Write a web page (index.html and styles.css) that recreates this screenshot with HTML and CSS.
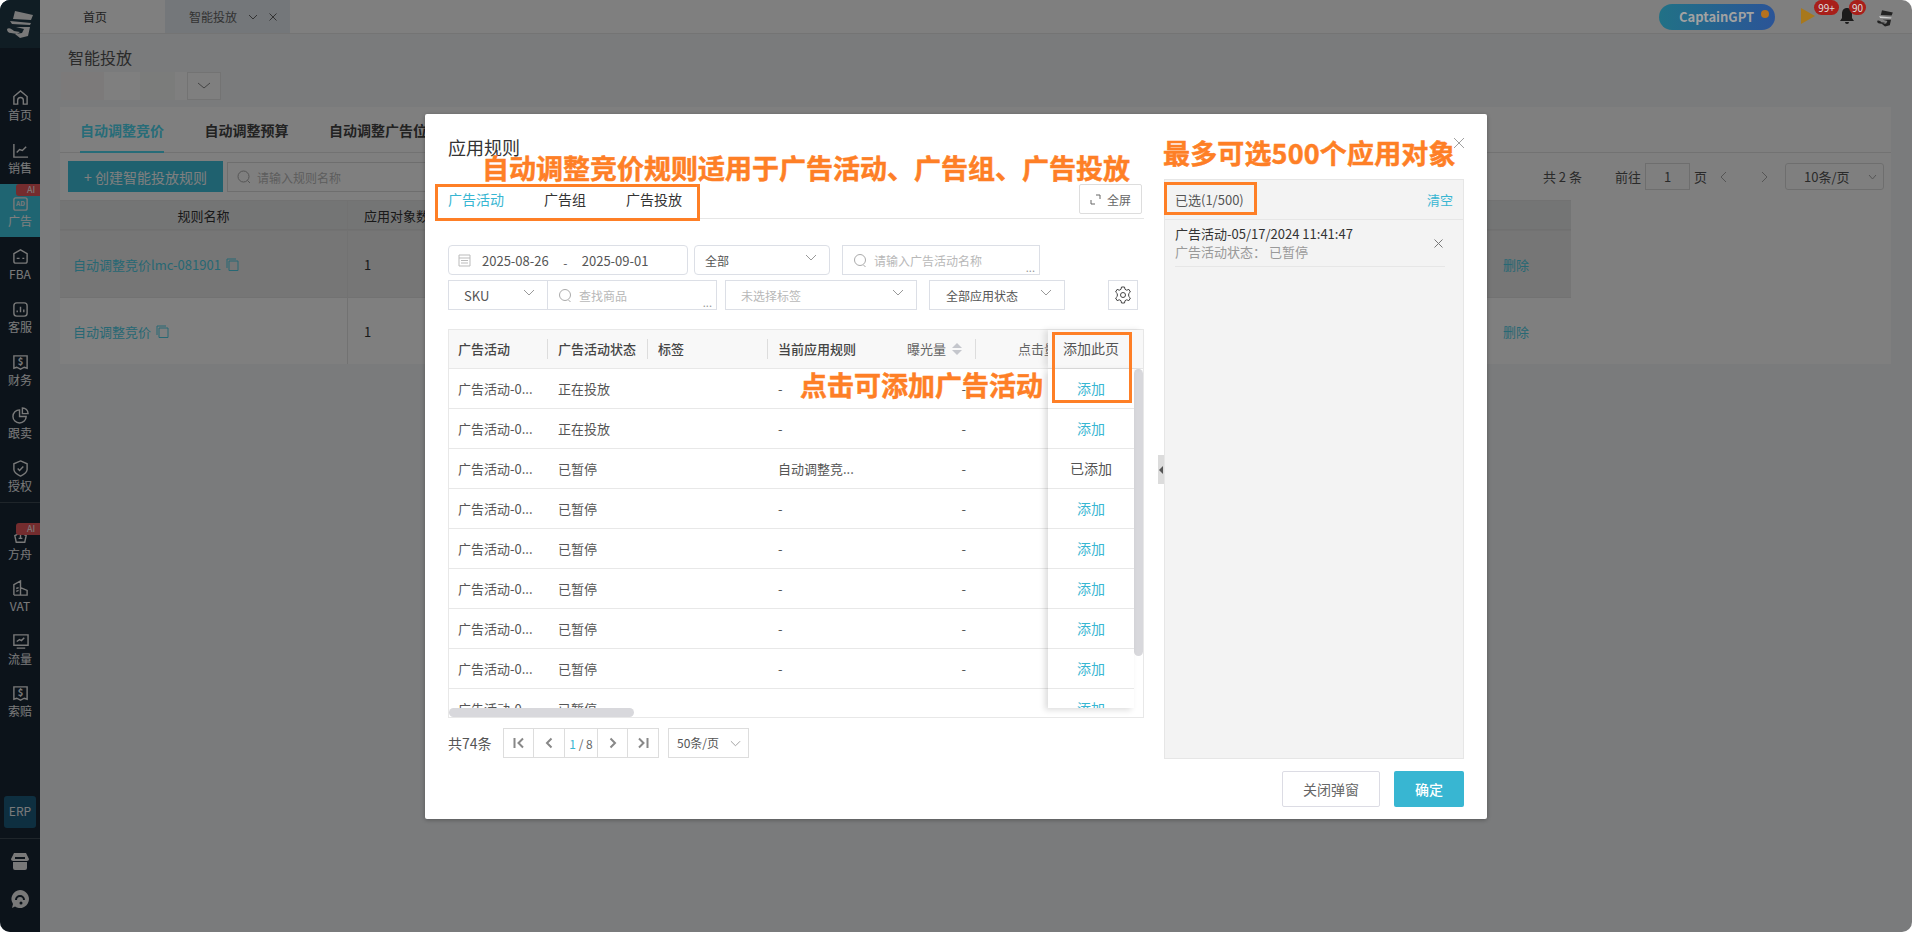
FILE: index.html
```html
<!DOCTYPE html>
<html lang="zh-CN">
<head>
    <meta charset="UTF-8">
    <meta name="viewport" content="width=device-width, initial-scale=1.0">
    <title>智能投放</title>
    <link rel="stylesheet" href="styles.css">
</head>
<body>
<div class="app">
    <!-- Sidebar -->
    <aside class="sidebar">
        <div class="side-logo">
            <svg width="40" height="40" viewBox="0 0 40 40"><path d="M15 6l18 4-2 5-18-1z" fill="#f2f2f2"/><path d="M10 16l21 2-1 2-18-1z" fill="#f2f2f2"/><path d="M16 22h14l-2 9-8 2-5-4 7-1 2-4z" fill="#f2f2f2"/><path d="M7 24c2-2 5 0 7 2l6 1-3 2-6-1c-3 0-4-2-4-4z" fill="#f2f2f2"/></svg>
        </div>
        <nav class="side-nav">
            <a class="side-item">
                <svg class="side-icon" viewBox="0 0 18 18"><path d="M2 8l7-6 7 6v8h-4v-4a3 3 0 0 0-6 0v4H2z"/></svg>
                <span>首页</span>
            </a>
            <a class="side-item">
                <svg class="side-icon" viewBox="0 0 18 18"><path d="M2 2v14h15M5 11l3-3 3 1 4-4"/></svg>
                <span>销售</span>
            </a>
            <a class="side-item active">
                <i class="ai-tag">AI</i>
                <svg class="side-icon" viewBox="0 0 18 18"><rect x="2" y="3" width="14" height="13" rx="2"/><text x="9" y="12" class="ad-text">AD</text></svg>
                <span>广告</span>
            </a>
            <a class="side-item">
                <svg class="side-icon" viewBox="0 0 18 18"><path d="M2 6l7-4 7 4v8a2 2 0 0 1-2 2H4a2 2 0 0 1-2-2zM5 11h3M11 11h2"/></svg>
                <span>FBA</span>
            </a>
            <a class="side-item">
                <svg class="side-icon" viewBox="0 0 18 18"><rect x="2" y="2" width="14" height="14" rx="3"/><path d="M5.500 12v-2M9 12V6M12.500 12V9"/></svg>
                <span>客服</span>
            </a>
            <a class="side-item">
                <svg class="side-icon" viewBox="0 0 18 18"><path d="M2 2h14v13l-3-1-4 2-4-2-3 1z"/><text x="9" y="12" class="ad-text dollar">$</text></svg>
                <span>财务</span>
            </a>
            <a class="side-item">
                <svg class="side-icon" viewBox="0 0 18 18"><path d="M8 3a7 7 0 1 0 7 7H8zM11 1v6h6a6 6 0 0 0-6-6z"/></svg>
                <span>跟卖</span>
            </a>
            <a class="side-item">
                <svg class="side-icon" viewBox="0 0 18 18"><path d="M9 1l7 3v6c0 3-3 5-7 7-4-2-7-4-7-7V4zM6 9l2 2 4-4"/></svg>
                <span>授权</span>
            </a>
        </nav>
        <nav class="side-nav side-second">
            <a class="side-item">
                <i class="ai-tag">AI</i>
                <svg class="side-icon" viewBox="0 0 18 18"><path d="M5 5l4-3 4 3M3 8l2-1c2-2 6-2 8 0l2 1-1.500 7h-9zM9 6v5M7 11h4"/></svg>
                <span>方舟</span>
            </a>
            <a class="side-item">
                <svg class="side-icon" viewBox="0 0 18 18"><path d="M2 16V5l7-4v15M9 8l7 3v5H2M4.500 9l2.500-1M4.500 12l2.500-1"/></svg>
                <span>VAT</span>
            </a>
            <a class="side-item">
                <svg class="side-icon" viewBox="0 0 18 18"><path d="M2 2h15v11H2zM5 16h9M5 9l3-2 2 1 3-3"/></svg>
                <span>流量</span>
            </a>
            <a class="side-item">
                <svg class="side-icon" viewBox="0 0 18 18"><path d="M2 2h14v13l-3-1-4 2-4-2-3 1z"/><text x="9" y="12" class="ad-text dollar">$</text></svg>
                <span>索赔</span>
            </a>
        </nav>
        <div class="side-bottom">
            <div class="erp">ERP</div>
            <div class="side-tools">
                <svg width="18" height="18" viewBox="0 0 18 18"><path d="M3 1h12l3 6c0 1-1 2-2 2H2C1 9 0 8 0 7zM2 10h14v6a2 2 0 0 1-2 2H4a2 2 0 0 1-2-2z" fill="#f2f2f2"/><path d="M4 6h10" stroke="#182634" stroke-width="2"/></svg>
                <svg width="18" height="18" viewBox="0 0 18 18"><path d="M9 0a9 9 0 1 1-5 16.500L1 18l1-4A9 9 0 0 1 9 0z" fill="#f2f2f2"/><path d="M5 10a4 4 0 1 1 8 0" fill="none" stroke="#182634" stroke-width="2"/><circle cx="10" cy="13" r="1.500" fill="#182634"/></svg>
            </div>
        </div>
    </aside>

    <main class="main">
        <!-- Top tabs -->
        <header class="topbar">
            <div class="top-tab">首页</div>
            <div class="top-tab current">
                <span>智能投放</span>
                <svg class="top-chev" width="10" height="6" viewBox="0 0 10 6"><path d="M1 1l4 4 4-4"/></svg>
                <svg class="top-chev" width="8" height="8" viewBox="0 0 8 8"><path d="M0.500 0.500l7 7M7.500 0.500l-7 7"/></svg>
            </div>
            <div class="status">
                <div class="gpt">CaptainGPT<i class="gpt-dot"></i></div>
                <div class="play"><i class="badge badge-play">99+</i></div>
                <div class="bell">
                    <svg width="16" height="18" viewBox="0 0 16 18"><path d="M8 1c3 0 5 2 5 6v4l2 3H1l2-3V7c0-4 2-6 5-6zM6 15h4a2 2 0 0 1-4 0z" fill="#1c1c1c"/></svg>
                    <i class="badge badge-bell">90</i>
                </div>
                <svg class="avatar" width="18" height="18" viewBox="5 4 30 30"><path d="M15 6l18 4-2 5-18-1z" fill="#222"/><path d="M10 16l21 2-1 2-18-1z" fill="#ccc"/><path d="M16 22h14l-2 9-8 2-5-4 7-1 2-4z" fill="#222"/><path d="M7 24c2-2 5 0 7 2l6 1-3 2-6-1c-3 0-4-2-4-4z" fill="#222"/></svg>
            </div>
        </header>

        <div class="page">
            <h1 class="page-title">智能投放</h1>
            <div class="store-filter">
                <i class="patch p1"></i><i class="patch p2"></i><i class="patch p3"></i><i class="patch p4"></i>
                <div class="patch-select"><svg width="14" height="8" viewBox="0 0 14 8"><path d="M1 1l6 5 6-5"/></svg></div>
            </div>

            <section class="card">
                <div class="card-tabs">
                    <div class="card-tab active">自动调整竞价</div>
                    <div class="card-tab">自动调整预算</div>
                    <div class="card-tab">自动调整广告位</div>
                </div>
                <div class="toolbar">
                    <button class="btn-create">+ 创建智能投放规则</button>
                    <div class="rule-search">
                        <svg class="search-svg" width="14" height="14" viewBox="0 0 14 14"><circle cx="6.500" cy="6.500" r="5.500"/><path d="M10.500 10.500l2.500 2.500"/></svg>
                        <span>请输入规则名称</span>
                    </div>
                    <div class="list-pager">
                        <span class="total">共 2 条</span>
                        <span>前往</span>
                        <span class="page-input">1</span>
                        <span>页</span>
                        <svg class="arrow" width="7" height="12" viewBox="0 0 7 12"><path d="M6 1L1 6l5 5"/></svg>
                        <svg class="arrow" width="7" height="12" viewBox="0 0 7 12"><path d="M1 1l5 5-5 5"/></svg>
                        <span class="size-select">10条/页<svg width="9" height="6" viewBox="0 0 9 6"><path d="M1 1l3.500 4L8 1"/></svg></span>
                    </div>
                </div>
                <div class="rules">
                    <div class="rule-row rule-head">
                        <div class="rule-name">规则名称</div>
                        <div class="rule-count">应用对象数</div>
                        <div class="rule-op"></div>
                    </div>
                    <div class="rule-row hover">
                        <div class="rule-name"><a>自动调整竞价lmc-081901</a><svg class="copy" width="13" height="13" viewBox="0 0 13 13"><path d="M3 3h9v9.500H3zM1 10V1h9"/></svg></div>
                        <div class="rule-count">1</div>
                        <div class="rule-op"><a>删除</a></div>
                    </div>
                    <div class="rule-row">
                        <div class="rule-name"><a>自动调整竞价</a><svg class="copy" width="13" height="13" viewBox="0 0 13 13"><path d="M3 3h9v9.500H3zM1 10V1h9"/></svg></div>
                        <div class="rule-count">1</div>
                        <div class="rule-op"><a>删除</a></div>
                    </div>
                </div>
            </section>
        </div>
    </main>

    <!-- Dialog -->
    <div class="overlay">
        <div class="modal">
            <svg class="modal-close" width="12" height="12" viewBox="0 0 12 12"><path d="M1 1l10 10M11 1L1 11"/></svg>
            <div class="modal-body">
                <div class="left-col">
                    <h2 class="modal-title">应用规则</h2>
                    <div class="object-tabs">
                        <div class="object-tab active">广告活动</div>
                        <div class="object-tab">广告组</div>
                        <div class="object-tab">广告投放</div>
                        <button class="btn-full">
                            <svg width="11" height="11" viewBox="0 0 11 11"><path d="M6 1h4v4M1 6v4h4"/></svg>全屏
                        </button>
                    </div>

                    <div class="filters">
                        <div class="field w-date round">
                            <svg class="cal" width="13" height="14" viewBox="0 0 13 14"><path d="M1 2h11v11H1zM1 5h11M3 7.500h7M3 10h7"/></svg>
                            <span class="date">2025-08-26</span><span class="d-sep">-</span><span class="date">2025-09-01</span>
                        </div>
                        <div class="field w-all round"><span>全部</span><svg class="chev" width="12" height="7" viewBox="0 0 12 7"><path d="M1 1l5 5 5-5"/></svg></div>
                        <div class="field w-name">
                            <svg class="search-svg" width="13" height="15" viewBox="0 0 13 15"><circle cx="6" cy="7" r="5.500"/><path d="M9.500 12l2 2"/></svg>
                            <span class="ph">请输入广告活动名称</span><span class="dots">...</span>
                        </div>
                    </div>
                    <div class="filters second">
                        <div class="field w-sku"><span>SKU</span><svg class="chev" width="12" height="7" viewBox="0 0 12 7"><path d="M1 1l5 5 5-5"/></svg></div>
                        <div class="field w-goods">
                            <svg class="search-svg" width="13" height="15" viewBox="0 0 13 15"><circle cx="6" cy="7" r="5.500"/><path d="M9.500 12l2 2"/></svg>
                            <span class="ph">查找商品</span><span class="dots">...</span>
                        </div>
                        <div class="field w-tag"><span class="ph">未选择标签</span><svg class="chev" width="12" height="7" viewBox="0 0 12 7"><path d="M1 1l5 5 5-5"/></svg></div>
                        <div class="field w-state"><span>全部应用状态</span><svg class="chev" width="12" height="7" viewBox="0 0 12 7"><path d="M1 1l5 5 5-5"/></svg></div>
                        <div class="gear">
                            <svg width="18" height="18" viewBox="0 0 18 18"><path d="M7.500 1h3l.5 2.300 1.700.9 2.200-.8 1.500 2.600-1.700 1.600v2.800l1.700 1.600-1.500 2.600-2.200-.8-1.700.9-.5 2.300h-3L7 14.700l-1.700-.9-2.200.8-1.500-2.600 1.700-1.600V7.600L1.600 6l1.500-2.600 2.200.8L7 3.300z"/><circle cx="9" cy="9" r="2.500"/></svg>
                        </div>
                    </div>

                    <div class="tbl">
                        <div class="tbl-head">
                            <div class="head-main">
                                <div class="th c1 sep">广告活动</div>
                                <div class="th c2 sep">广告活动状态</div>
                                <div class="th c3 sep">标签</div>
                                <div class="th c4">当前应用规则</div>
                                <div class="th c5 sep light">曝光量<span class="sort"><i class="up"></i><i class="down"></i></span></div>
                                <div class="th c6 light">点击量</div>
                            </div>
                            <div class="head-fixed">添加此页</div>
                        </div>
                        <div class="tbl-body">
                            <div class="body-main">
                                <div class="tr"><div class="c1">广告活动-0...</div><div class="c2">正在投放</div><div class="c3"></div><div class="c4">-</div><div class="c5">-</div><div class="c6">-</div></div>
                                <div class="tr"><div class="c1">广告活动-0...</div><div class="c2">正在投放</div><div class="c3"></div><div class="c4">-</div><div class="c5">-</div><div class="c6">-</div></div>
                                <div class="tr"><div class="c1">广告活动-0...</div><div class="c2">已暂停</div><div class="c3"></div><div class="c4">自动调整竞...</div><div class="c5">-</div><div class="c6">-</div></div>
                                <div class="tr"><div class="c1">广告活动-0...</div><div class="c2">已暂停</div><div class="c3"></div><div class="c4">-</div><div class="c5">-</div><div class="c6">-</div></div>
                                <div class="tr"><div class="c1">广告活动-0...</div><div class="c2">已暂停</div><div class="c3"></div><div class="c4">-</div><div class="c5">-</div><div class="c6">-</div></div>
                                <div class="tr"><div class="c1">广告活动-0...</div><div class="c2">已暂停</div><div class="c3"></div><div class="c4">-</div><div class="c5">-</div><div class="c6">-</div></div>
                                <div class="tr"><div class="c1">广告活动-0...</div><div class="c2">已暂停</div><div class="c3"></div><div class="c4">-</div><div class="c5">-</div><div class="c6">-</div></div>
                                <div class="tr"><div class="c1">广告活动-0...</div><div class="c2">已暂停</div><div class="c3"></div><div class="c4">-</div><div class="c5">-</div><div class="c6">-</div></div>
                                <div class="tr"><div class="c1">广告活动-0...</div><div class="c2">已暂停</div><div class="c3"></div><div class="c4">-</div><div class="c5">-</div><div class="c6">-</div></div>
                            </div>
                            <div class="body-fixed">
                                <div class="td-add"><a>添加</a></div>
                                <div class="td-add"><a>添加</a></div>
                                <div class="td-add">已添加</div>
                                <div class="td-add"><a>添加</a></div>
                                <div class="td-add"><a>添加</a></div>
                                <div class="td-add"><a>添加</a></div>
                                <div class="td-add"><a>添加</a></div>
                                <div class="td-add"><a>添加</a></div>
                                <div class="td-add"><a>添加</a></div>
                            </div>
                            <div class="vbar"><i></i></div>
                        </div>
                        <div class="hbar"><i></i></div>
                    </div>

                    <div class="pager">
                        <span class="pager-total">共74条</span>
                        <div class="pager-box">
                            <span class="pg w30"><svg width="12" height="12" viewBox="0 0 12 12"><path d="M1.500 1v10M10 1.500L5.500 6l4.500 4.500"/></svg></span>
                            <span class="pg w31"><svg width="8" height="12" viewBox="0 0 8 12"><path d="M6.500 1.500L2 6l4.500 4.500"/></svg></span>
                            <span class="pg w33"><b>1</b>&nbsp;/ 8</span>
                            <span class="pg w30"><svg width="8" height="12" viewBox="0 0 8 12"><path d="M1.500 1.500L6 6l-4.500 4.500"/></svg></span>
                            <span class="pg w30 last"><svg width="12" height="12" viewBox="0 0 12 12"><path d="M10.500 1v10M2 1.500L6.500 6 2 10.500"/></svg></span>
                        </div>
                        <div class="pager-size">50条/页<svg class="chev" width="11" height="7" viewBox="0 0 12 7"><path d="M1 1l5 5 5-5"/></svg></div>
                    </div>
                </div>

                <aside class="picked">
                    <div class="collapse"><i></i></div>
                    <div class="picked-head">
                        <span>已选(1/500)</span>
                        <a>清空</a>
                    </div>
                    <div class="picked-item">
                        <div>
                            <div class="picked-name">广告活动-05/17/2024 11:41:47</div>
                            <div class="picked-state">广告活动状态： 已暂停</div>
                        </div>
                        <svg class="picked-x" width="9" height="9" viewBox="0 0 9 9"><path d="M0.500 0.500l8 8M8.500 0.500l-8 8"/></svg>
                    </div>
                </aside>
            </div>
            <div class="modal-foot">
                <button class="btn-close">关闭弹窗</button>
                <button class="btn-ok">确定</button>
            </div>

            <!-- Orange notes drawn over the dialog -->
            <div class="note note-a">自动调整竞价规则适用于广告活动、广告组、广告投放</div>
            <div class="note note-b">最多可选500个应用对象</div>
            <div class="note note-c">点击可添加广告活动</div>
            <div class="mark mark-a"></div>
            <div class="mark mark-b"></div>
            <div class="mark mark-c"></div>
        </div>
    </div>
</div>
</body>
</html>
```

FILE: styles.css
```css
/* Base */
* {
    margin: 0;
    padding: 0;
    box-sizing: border-box;
    font-family: "Noto Sans CJK SC", "Noto Sans", sans-serif;
}

html, body {
    height: 100%;
    background-color: #fff;
    overflow: hidden;
}

i {
    font-style: normal;
}

.app {
    position: relative;
    display: flex;
    width: 100%;
    height: 100%;
    border-radius: 10px;
    overflow: hidden;
    color: #333;
}

/* Sidebar */
.sidebar {
    width: 40px;
    flex-shrink: 0;
    display: flex;
    flex-direction: column;
    background-color: #182634;
    color: #f4f4f4;
}

.side-logo {
    height: 48px;
    padding-top: 5px;
    background-color: #203a48;
}

.side-nav {
    margin-top: 30px;
    border-bottom: 1px solid #3e4a55;
}

.side-second {
    margin-top: 14px;
    border-bottom: none;
}

.side-item {
    position: relative;
    height: 53px;
    display: flex;
    flex-direction: column;
    align-items: center;
    justify-content: flex-end;
    padding-bottom: 8px;
    font-size: 12px;
    line-height: 16px;
}

.side-second .side-item {
    height: 52.500px;
}

.side-item.active {
    background-color: #3fcbe4;
    color: #fff;
}

.side-icon {
    width: 17px;
    height: 17px;
    margin-bottom: 1px;
    fill: none;
    stroke: #f2f2f2;
    stroke-width: 1.500;
}

.ad-text {
    font-size: 7px;
    font-weight: 700;
    fill: #f2f2f2;
    stroke: none;
    text-anchor: middle;
}

.dollar {
    font-size: 10px;
}

.ai-tag {
    position: absolute;
    top: 0;
    right: 0;
    width: 24px;
    height: 12px;
    padding-left: 6px;
    border-radius: 3px 0 0 3px;
    background-color: #e8585c;
    color: #fff;
    font-size: 9px;
    line-height: 12px;
    text-align: center;
}

.side-second .ai-tag {
    top: 6px;
}

.side-bottom {
    margin-top: auto;
}

.erp {
    width: 32px;
    height: 32px;
    margin: 0 4px 10px;
    border-radius: 3px;
    background-color: #1c5e80;
    color: #f4f4f4;
    font-size: 12px;
    line-height: 30px;
    text-align: center;
}

.side-tools {
    height: 94px;
    padding-top: 13px;
    border-top: 1px solid #3e4a55;
    display: flex;
    flex-direction: column;
    align-items: center;
    gap: 20px;
}

/* Main area */
.main {
    flex: 1;
    min-width: 0;
    display: flex;
    flex-direction: column;
    background-color: #f4f6f8;
}

.topbar {
    height: 34px;
    display: flex;
    background-color: #fff;
    border-bottom: 1px solid #e8e8e8;
    font-size: 12px;
}

.top-tab {
    width: 125px;
    display: flex;
    align-items: center;
    padding-left: 43px;
    color: #444;
}

.top-tab.current {
    padding-left: 24px;
    background-color: #e8eff5;
    color: #666;
}

.top-chev {
    margin-left: 11px;
    fill: none;
    stroke: #666;
}

.status {
    position: relative;
    z-index: 20;
    margin-left: auto;
    display: flex;
    align-items: flex-start;
    padding-right: 18px;
}

.gpt {
    position: relative;
    width: 116px;
    height: 26px;
    margin-top: 4px;
    padding-left: 20px;
    border-radius: 13px;
    background-image: linear-gradient(90deg, #217186, #2b5497);
    color: #a2a2a2;
    font-size: 13px;
    font-weight: 700;
    line-height: 26px;
}

.gpt-dot {
    position: absolute;
    top: 6px;
    right: 6px;
    width: 8px;
    height: 8px;
    border-radius: 50%;
    background-color: #b5721f;
}

.play {
    position: relative;
    width: 0;
    height: 0;
    margin: 8px 0 0 26px;
    border-style: solid;
    border-width: 8px 0 8px 14px;
    border-color: transparent transparent transparent #a8781c;
}

.badge {
    position: absolute;
    height: 15px;
    border-radius: 8px;
    background-color: #a81f1a;
    color: #ddd;
    font-size: 10px;
    line-height: 15px;
    text-align: center;
}

.badge-play {
    top: -16px;
    left: -1px;
    width: 25px;
}

.badge-bell {
    top: 0;
    left: 10px;
    width: 17px;
}

.bell {
    position: relative;
    width: 34px;
    margin-left: 24px;
    padding-top: 7px;
}

.avatar {
    margin: 9px 0 0 3px;
}

/* Page */
.page {
    flex: 1;
}

.page-title {
    padding: 12px 0 0 28px;
    height: 38px;
    font-size: 16px;
    font-weight: 400;
    line-height: 22px;
    color: #555;
}

.store-filter {
    display: flex;
    margin-left: 21px;
    height: 28px;
}

.patch {
    display: block;
    height: 28px;
}

.p1 { width: 43px; background-color: #f8f4f4; }
.p2 { width: 36px; background-color: #fff; }
.p3 { width: 35px; background-color: #f6f8f6; }
.p4 { width: 12px; background-color: #fff; }

.patch-select {
    width: 34px;
    height: 28px;
    display: flex;
    align-items: center;
    justify-content: center;
    background-color: #fff;
    border: 1px solid #e6e6e6;
}

.patch-select svg {
    fill: none;
    stroke: #888;
}

.card {
    width: 1831px;
    margin: 7px 0 0 20px;
    background-color: #fff;
}

.card-tabs {
    height: 46px;
    display: flex;
    gap: 40.500px;
    padding-left: 20px;
    border-bottom: 1px solid #e4e4e4;
}

.card-tab {
    height: 46px;
    font-size: 14px;
    font-weight: 700;
    line-height: 47px;
    color: #444;
}

.card-tab.active {
    border-bottom: 2px solid #4fd8f0;
    color: #4fd8f0;
}

.toolbar {
    height: 47px;
    display: flex;
    align-items: flex-start;
    padding: 8px 7px 0 8px;
    font-size: 13px;
    color: #555;
}

.btn-create {
    width: 155px;
    height: 31px;
    border: none;
    background-color: #3fc2de;
    color: #fff;
    font-size: 14px;
}

.rule-search {
    width: 240px;
    height: 30px;
    margin: 1px 0 0 4px;
    display: flex;
    align-items: center;
    gap: 6px;
    padding-left: 9px;
    border: 1px solid #ddd;
    color: #bbb;
    font-size: 12px;
}

.search-svg {
    flex-shrink: 0;
    fill: none;
    stroke: #aaa;
}

.list-pager {
    margin-left: auto;
    display: flex;
    align-items: center;
    height: 27px;
    margin-top: 2px;
}

.total {
    margin-right: 33px;
}

.page-input {
    width: 45px;
    height: 27px;
    margin: 0 4px;
    border: 1px solid #ddd;
    line-height: 25px;
    text-align: center;
}

.arrow {
    margin-left: 13px;
    fill: none;
    stroke: #aaa;
}

.arrow + .arrow {
    margin-left: 34px;
}

.size-select {
    width: 99px;
    height: 27px;
    margin-left: 17px;
    padding-left: 18px;
    display: flex;
    align-items: center;
    justify-content: space-between;
    padding-right: 6px;
    border: 1px solid #ddd;
    border-radius: 3px;
}

.size-select svg {
    fill: none;
    stroke: #aaa;
}

.rule-row {
    display: flex;
    height: 67px;
    width: 1511px;
    border-top: 1px solid #e4e4e4;
    font-size: 13px;
    align-items: stretch;
}

.rule-row.rule-head {
    height: 30px;
    background-color: #e8eaeb;
    border-bottom: 1px solid #e0e0e0;
    color: #333;
}

.rule-row.hover {
    background-color: #ececec;
}

.rule-name {
    width: 288px;
    display: flex;
    align-items: center;
    gap: 5px;
    padding-left: 13px;
    border-right: 1px solid #e4e4e4;
}

.rule-head .rule-name {
    justify-content: center;
    padding-left: 0;
}

.rule-count {
    flex: 1;
    display: flex;
    align-items: center;
    padding-left: 16px;
}

.rule-op {
    width: 68px;
    display: flex;
    align-items: center;
}

.rule-row a {
    color: #4fd0e8;
}

.copy {
    fill: none;
    stroke: #4fd0e8;
}

/* Dialog */
.overlay {
    position: absolute;
    inset: 0;
    z-index: 10;
    display: flex;
    align-items: center;
    justify-content: center;
    padding-top: 1px;
    background-color: rgba(0, 0, 0, 0.5);
}

.modal {
    position: relative;
    width: 1062px;
    height: 705px;
    padding: 22px 23px 11px 23px;
    background-color: #fff;
    border-radius: 2px;
    box-shadow: 0 1px 4px rgba(0, 0, 0, 0.3);
}

.modal-close {
    position: absolute;
    top: 23px;
    right: 22px;
    fill: none;
    stroke: #a0a0a0;
}

.modal-body {
    display: flex;
    justify-content: space-between;
}

.left-col {
    width: 696px;
}

.modal-title {
    height: 22px;
    font-size: 18px;
    font-weight: 400;
    line-height: 22px;
    color: #333;
}

.object-tabs {
    height: 35px;
    margin-top: 26px;
    display: flex;
    gap: 40px;
    border-bottom: 1px solid #e6e6e6;
}

.object-tab {
    height: 35px;
    padding-top: 3px;
    font-size: 14px;
    line-height: 24px;
    color: #333;
}

.object-tab.active {
    color: #38b6d2;
    border-bottom: 1px solid #38b6d2;
}

.btn-full {
    width: 63px;
    height: 30px;
    margin: 0 2px 0 auto;
    display: flex;
    align-items: center;
    justify-content: center;
    gap: 6px;
    background-color: #fff;
    border: 1px solid #ddd;
    border-radius: 2px;
    color: #666;
    font-size: 12px;
}

.btn-full svg {
    fill: none;
    stroke: #666;
}

/* Filters */
.filters {
    display: flex;
    margin-top: 26px;
    font-size: 12px;
    color: #555;
}

.filters.second {
    margin-top: 5px;
}

.field {
    position: relative;
    height: 30px;
    display: flex;
    align-items: center;
    border: 1px solid #dcdfe6;
    background-color: #fff;
}

.round {
    border-radius: 4px;
}

.chev {
    position: absolute;
    top: 8px;
    right: 12px;
    fill: none;
    stroke: #999;
}

.ph {
    color: #b8b8b8;
    white-space: nowrap;
}

.dots {
    position: absolute;
    right: 4px;
    bottom: 1px;
    font-size: 11px;
    line-height: 12px;
    color: #999;
}

.w-date {
    width: 240px;
    padding-left: 9px;
}

.cal {
    margin-right: 11px;
    fill: none;
    stroke: #bbb;
}

.date {
    font-size: 13px;
}

.d-sep {
    width: 33px;
    padding-top: 5px;
    text-align: center;
}

.w-all {
    width: 136px;
    margin-left: 6px;
    padding-left: 10px;
}

.w-name {
    width: 198px;
    margin-left: 12px;
    padding-left: 11px;
    gap: 7px;
}

.w-sku {
    width: 100px;
    padding-left: 15px;
    font-size: 13px;
}

.w-goods {
    width: 170px;
    margin-left: -1px;
    padding-left: 11px;
    gap: 7px;
}

.w-tag {
    width: 192px;
    margin-left: 8px;
    padding-left: 15px;
}

.w-state {
    width: 136px;
    margin-left: 12px;
    padding-left: 16px;
}

.gear {
    width: 30px;
    height: 30px;
    margin-left: 43px;
    display: flex;
    align-items: center;
    justify-content: center;
    border: 1px solid #dcdfe6;
}

.gear svg {
    fill: none;
    stroke: #444;
}

/* Table */
.tbl {
    height: 389px;
    margin-top: 19px;
    border: 1px solid #e8e8e8;
    font-size: 13px;
    color: #555;
}

.tbl-head {
    height: 39px;
    display: flex;
    background-color: #f8f8f8;
    border-bottom: 1px solid #e8e8e8;
}

.head-main {
    width: 599px;
    display: flex;
    overflow: hidden;
}

.th {
    position: relative;
    flex-shrink: 0;
    height: 38px;
    padding: 0 10px;
    font-weight: 500;
    line-height: 37px;
    color: #444;
}

.th.sep::after {
    content: "";
    position: absolute;
    top: 9px;
    right: 0;
    width: 1px;
    height: 20px;
    background-color: #ddd;
}

.th.light {
    font-weight: 400;
    color: #666;
}

.c1 { width: 99px; flex-shrink: 0; padding-left: 9px; }
.c2 { width: 100px; flex-shrink: 0; padding-left: 10px; }
.c3 { width: 120px; flex-shrink: 0; padding-left: 10px; }
.c4 { width: 100px; flex-shrink: 0; padding-left: 10px; }
.c5 { width: 108px; flex-shrink: 0; text-align: right; padding-right: 10px; }
.c6 { width: 110px; flex-shrink: 0; text-align: right; padding-right: 29px; }

.th.c5 {
    padding-right: 14px;
}

.th.c6 {
    padding-right: 29px;
}

.sort {
    display: inline-block;
    width: 10px;
    height: 12px;
    margin-left: 6px;
    vertical-align: -1px;
}

.sort i {
    display: block;
    width: 0;
    height: 0;
    border-left: 5px solid transparent;
    border-right: 5px solid transparent;
}

.sort .up {
    border-bottom: 5px solid #c4c6cc;
    margin-bottom: 2px;
}

.sort .down {
    border-top: 5px solid #c4c6cc;
}

.head-fixed {
    position: relative;
    width: 95px;
    padding-right: 9px;
    font-size: 14px;
    line-height: 37px;
    text-align: center;
    color: #555;
    background-color: #f8f8f8;
    box-shadow: -4px 0 6px rgba(0, 0, 0, 0.1);
}

.tbl-body {
    height: 339px;
    display: flex;
}

.body-main {
    width: 599px;
    height: 339px;
    flex-shrink: 0;
    overflow: hidden;
}

.tr {
    height: 40px;
    display: flex;
    line-height: 39px;
    border-bottom: 1px solid #e8e8e8;
}

.body-fixed {
    position: relative;
    width: 86px;
    height: 339px;
    flex-shrink: 0;
    overflow: hidden;
    background-color: #fff;
    box-shadow: -3px 2px 6px rgba(0, 0, 0, 0.14);
}

.td-add {
    height: 40px;
    border-bottom: 1px solid #e8e8e8;
    font-size: 14px;
    line-height: 39px;
    text-align: center;
    color: #555;
}

.td-add a {
    color: #38b6d2;
}

.vbar {
    width: 9px;
    flex-shrink: 0;
}

.vbar i {
    display: block;
    height: 287px;
    border-radius: 5px;
    background-color: #d8d8dc;
}

.hbar {
    height: 9px;
}

.hbar i {
    display: block;
    width: 185px;
    height: 9px;
    border-radius: 5px;
    background-color: #d8d8dc;
}

/* Pager */
.pager {
    display: flex;
    align-items: center;
    margin-top: 10px;
    height: 30px;
    font-size: 14px;
    color: #555;
}

.pager-total {
    width: 55px;
}

.pager-box {
    display: flex;
    height: 30px;
    border: 1px solid #ddd;
}

.pg {
    display: flex;
    align-items: center;
    justify-content: center;
    border-right: 1px solid #ddd;
    font-size: 12px;
    color: #666;
}

.pg.last {
    border-right: none;
}

.pg b {
    font-weight: 400;
    color: #38b6d2;
}

.pg svg {
    fill: none;
    stroke: #888;
    stroke-width: 2;
}

.w30 { width: 30px; }
.w31 { width: 31px; }
.w33 { width: 33px; }

.pager-size {
    position: relative;
    width: 81px;
    height: 30px;
    margin-left: 9px;
    padding-left: 8px;
    border: 1px solid #ddd;
    font-size: 12px;
    line-height: 28px;
}

.pager-size .chev {
    top: 11px;
    right: 7px;
}

/* Selected panel */
.picked {
    position: relative;
    width: 300px;
    height: 580px;
    margin-top: 43px;
    background-color: #f3f3f3;
    border: 1px solid #e6e6e6;
}

.collapse {
    position: absolute;
    top: 275px;
    left: -7px;
    width: 6px;
    height: 29px;
    display: flex;
    align-items: center;
    justify-content: center;
    background-color: #dcdcdc;
}

.collapse i {
    width: 0;
    height: 0;
    border-top: 4px solid transparent;
    border-bottom: 4px solid transparent;
    border-right: 4px solid #555;
}

.picked-head {
    height: 40px;
    display: flex;
    align-items: center;
    justify-content: space-between;
    padding: 0 10px;
    border-bottom: 1px solid #e6e6e6;
    font-size: 13px;
    color: #555;
}

.picked-head a {
    color: #38b6d2;
}

.picked-item {
    display: flex;
    align-items: center;
    justify-content: space-between;
    margin: 6px 18px 0 10px;
    height: 41px;
    border-bottom: 1px solid #e6e6e6;
    padding-bottom: 6px;
    font-size: 13px;
    line-height: 18px;
}

.picked-name {
    color: #333;
}

.picked-state {
    color: #999;
}

.picked-x {
    margin-right: 2px;
    fill: none;
    stroke: #777;
}

.modal-foot {
    display: flex;
    justify-content: flex-end;
    gap: 14px;
    margin-top: 12px;
}

.btn-close,
.btn-ok {
    height: 36px;
    border-radius: 2px;
    font-size: 14px;
}

.btn-close {
    width: 98px;
    background-color: #fff;
    border: 1px solid #dcdce4;
    color: #666;
}

.btn-ok {
    width: 70px;
    background-color: #38b6d2;
    border: none;
    color: #fff;
    font-weight: 500;
}

/* Notes */
.note {
    position: absolute;
    z-index: 5;
    font-size: 27px;
    font-weight: 700;
    line-height: 30px;
    color: #fe7f26;
    white-space: nowrap;
    -webkit-text-stroke: 0.5px #fe7f26;
}

.note-a { left: 57px; top: 39px; }
.note-b { left: 738px; top: 24px; letter-spacing: 0.15px; }
.note-c { left: 375px; top: 256px; }

.mark {
    position: absolute;
    z-index: 5;
    border: 3px solid #fe7f26;
}

.mark-a { left: 10px; top: 70px; width: 265px; height: 37px; }
.mark-b { left: 739px; top: 68px; width: 93px; height: 33px; }
.mark-c { left: 627px; top: 218px; width: 80px; height: 71px; }
```
